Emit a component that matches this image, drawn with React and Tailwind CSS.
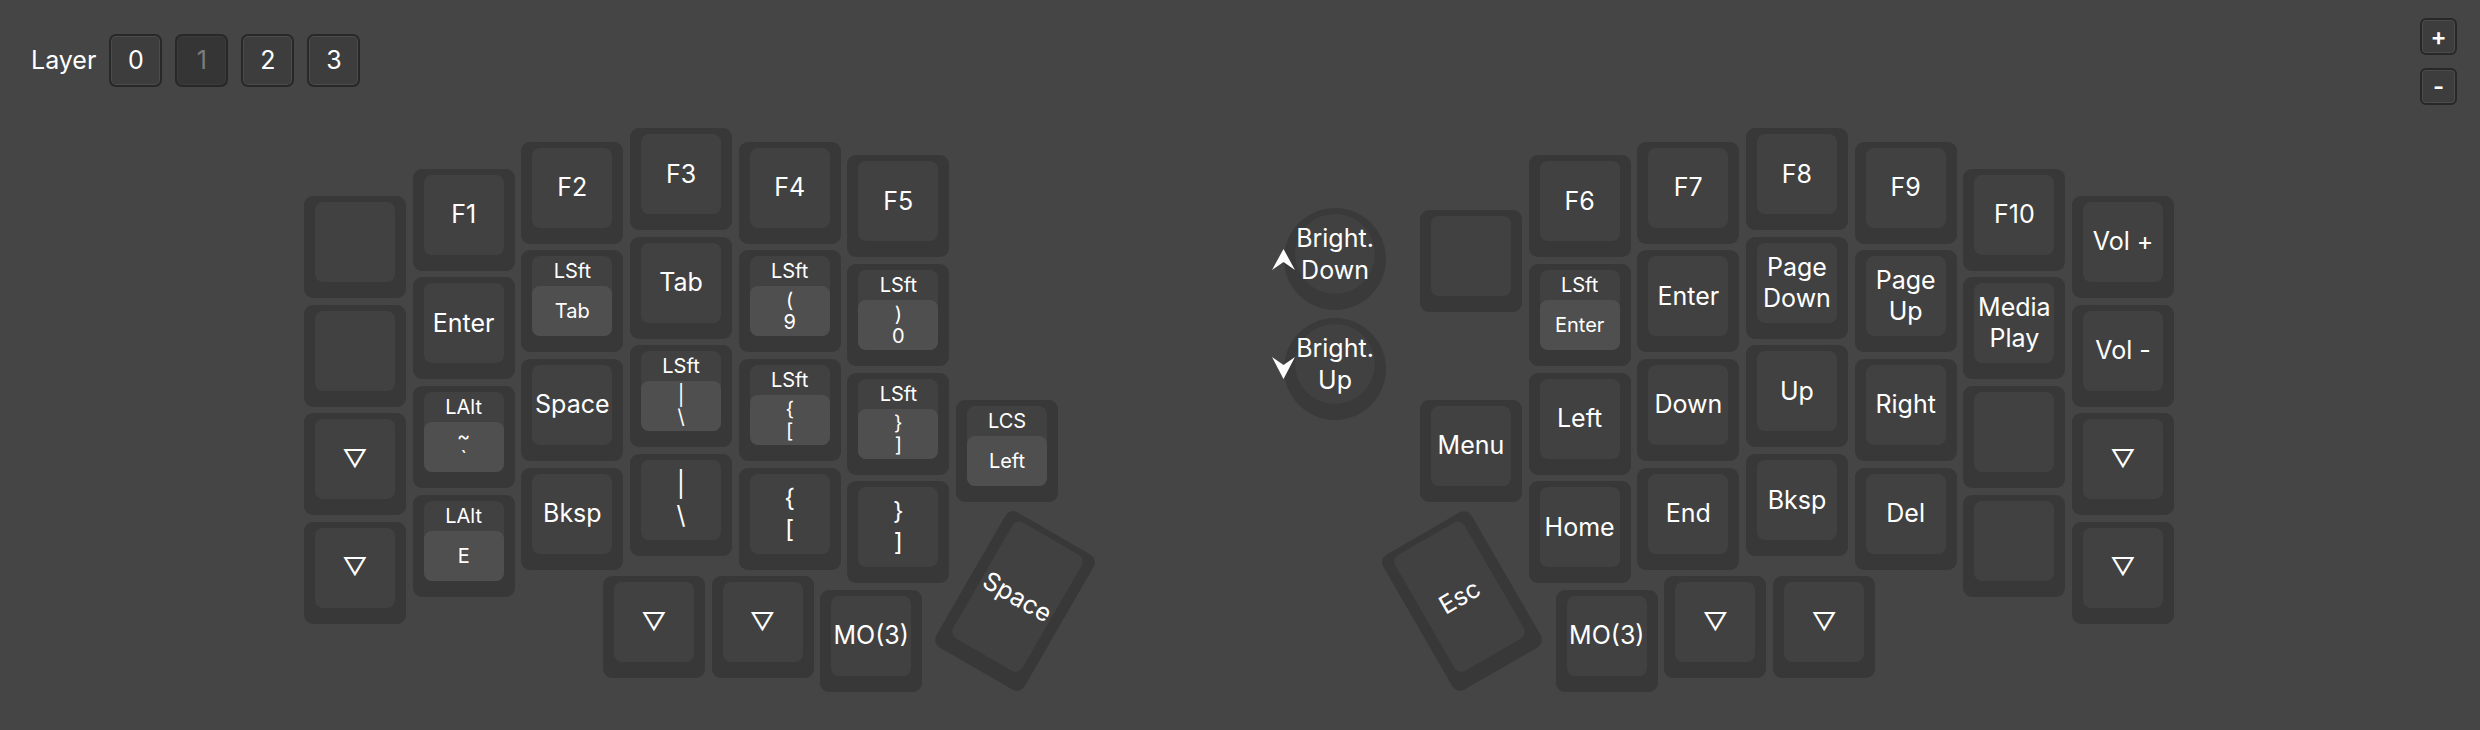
import React from "react";

// one key unit and the board origin (inside the board area)
const U = 108.67;
const LX = 304; // left half: outer column
const RX = 2072; // right half: outer column, mirrored
const TOP = 18;

// c = column from the outer edge, r = row (both in key units)
const leftKeys = [
  { c: 0, r: 0.625 },
  { c: 0, r: 1.625 },
  { c: 0, r: 2.625, t: "▽" },
  { c: 0, r: 3.625, t: "▽" },

  { c: 1, r: 0.375, t: "F1" },
  { c: 1, r: 1.375, t: "Enter" },
  { c: 1, r: 2.375, h: "LAlt", t: "~\n`" },
  { c: 1, r: 3.375, h: "LAlt", t: "E" },

  { c: 2, r: 0.125, t: "F2" },
  { c: 2, r: 1.125, h: "LSft", t: "Tab" },
  { c: 2, r: 2.125, t: "Space" },
  { c: 2, r: 3.125, t: "Bksp" },

  { c: 3, r: 0, t: "F3" },
  { c: 3, r: 1, t: "Tab" },
  { c: 3, r: 2, h: "LSft", t: "|\n\\" },
  { c: 3, r: 3, t: "|\n\\" },

  { c: 4, r: 0.125, t: "F4" },
  { c: 4, r: 1.125, h: "LSft", t: "(\n9" },
  { c: 4, r: 2.125, h: "LSft", t: "{\n[" },
  { c: 4, r: 3.125, t: "{\n[" },

  { c: 5, r: 0.25, t: "F5" },
  { c: 5, r: 1.25, h: "LSft", t: ")\n0" },
  { c: 5, r: 2.25, h: "LSft", t: "}\n]" },
  { c: 5, r: 3.25, t: "}\n]" },

  { c: 6, r: 2.5, h: "LCS", t: "Left" },

  // thumb cluster
  { c: 2.75, r: 4.125, t: "▽" },
  { c: 3.75, r: 4.125, t: "▽" },
  { c: 4.75, r: 4.25, t: "MO(3)" },
];

const rightKeys = [
  { c: 0, r: 0.625, t: "Vol +" },
  { c: 0, r: 1.625, t: "Vol -" },
  { c: 0, r: 2.625, t: "▽" },
  { c: 0, r: 3.625, t: "▽" },

  { c: 1, r: 0.375, t: "F10" },
  { c: 1, r: 1.375, t: "Media\nPlay" },
  { c: 1, r: 2.375 },
  { c: 1, r: 3.375 },

  { c: 2, r: 0.125, t: "F9" },
  { c: 2, r: 1.125, t: "Page\nUp" },
  { c: 2, r: 2.125, t: "Right" },
  { c: 2, r: 3.125, t: "Del" },

  { c: 3, r: 0, t: "F8" },
  { c: 3, r: 1, t: "Page\nDown" },
  { c: 3, r: 2, t: "Up" },
  { c: 3, r: 3, t: "Bksp" },

  { c: 4, r: 0.125, t: "F7" },
  { c: 4, r: 1.125, t: "Enter" },
  { c: 4, r: 2.125, t: "Down" },
  { c: 4, r: 3.125, t: "End" },

  { c: 5, r: 0.25, t: "F6" },
  { c: 5, r: 1.25, h: "LSft", t: "Enter" },
  { c: 5, r: 2.25, t: "Left" },
  { c: 5, r: 3.25, t: "Home" },

  { c: 6, r: 0.75 },
  { c: 6, r: 2.5, t: "Menu" },

  { c: 2.75, r: 4.125, t: "▽" },
  { c: 3.75, r: 4.125, t: "▽" },
  { c: 4.75, r: 4.25, t: "MO(3)" },
];

function Cap({ label, hold, height = 80 }) {
  if (hold) {
    return (
      <div className="flex flex-col rounded-[8px] bg-[#414141]" style={{ height }}>
        <div className="flex h-[30px] items-center justify-center text-[20px]">{hold}</div>
        <div className="flex flex-1 items-center justify-center whitespace-pre-line rounded-[8px] bg-[#4f4f4f] text-center text-[20px] leading-[22px]">
          {label}
        </div>
      </div>
    );
  }
  return (
    <div
      className="flex items-center justify-center whitespace-pre-line rounded-[8px] bg-[#414141] text-center text-[25px] leading-[31px]"
      style={{ height }}
    >
      {label}
    </div>
  );
}

function Key({ left, top, k }) {
  return (
    <div
      className="absolute h-[102px] w-[102px] rounded-[9px] bg-[#383838] px-[11px] pt-[6px]"
      style={{ left, top }}
    >
      <Cap label={k.t} hold={k.h} />
    </div>
  );
}

function Encoder({ top, label, dir }) {
  return (
    <div
      className="absolute left-[1284px] h-[102px] w-[102px] rounded-full bg-[#3a3a3a] px-[11px] pt-[6px]"
      style={{ top }}
    >
      <div className="flex h-[80px] items-center justify-center whitespace-pre-line rounded-full bg-[#414141] text-center text-[25px] leading-[32px]">
        {label}
      </div>
      <svg
        className={dir === "up" ? "absolute left-[-12px] top-[41px]" : "absolute left-[-12px] top-[39px]"}
        width="23"
        height="22"
        viewBox="0 0 23 22"
      >
        {dir === "up" ? (
          <polygon points="11.5,0 23,21 11.5,13 0,21" fill="#fff" />
        ) : (
          <polygon points="0,0 11.5,8 23,0 11.5,22" fill="#fff" />
        )}
      </svg>
    </div>
  );
}

function LayerButton({ children, active }) {
  return (
    <button
      className={
        active
          ? "flex h-[53px] w-[53px] items-center justify-center rounded-[7px] border-2 border-[#282828] bg-[#353535] text-[25px] text-[#7c7c7c] shadow-[inset_0_0_0_1px_#3c3c3c]"
          : "flex h-[53px] w-[53px] items-center justify-center rounded-[7px] border-2 border-[#282828] bg-[#3d3d3d] text-[25px] text-white shadow-[inset_0_0_0_1px_#4c4c4c]"
      }
    >
      {children}
    </button>
  );
}

export default function App() {
  return (
    <div className="h-[730px] w-[2480px] overflow-hidden bg-[#454545] font-['Inter','Noto_Sans','DejaVu_Sans',sans-serif] text-white">
      {/* top bar */}
      <div className="flex h-[110px] items-start justify-between pl-[31px] pr-[23px]">
        <div className="flex items-center gap-[13px] pt-[34px]">
          <span className="text-[25px]">Layer</span>
          <div className="flex gap-[13px]">
            <LayerButton>0</LayerButton>
            <LayerButton active>1</LayerButton>
            <LayerButton>2</LayerButton>
            <LayerButton>3</LayerButton>
          </div>
        </div>
        <div className="flex flex-col gap-[13px] pt-[18px]">
          <button className="flex h-[37px] w-[37px] items-center justify-center rounded-[6px] border-2 border-[#282828] bg-[#3d3d3d] text-[24px] font-semibold shadow-[inset_0_0_0_1px_#4c4c4c]">
            +
          </button>
          <button className="flex h-[37px] w-[37px] items-center justify-center rounded-[6px] border-2 border-[#282828] bg-[#3d3d3d] text-[24px] font-semibold shadow-[inset_0_0_0_1px_#4c4c4c]">
            -
          </button>
        </div>
      </div>

      {/* keyboard */}
      <div className="relative h-[620px]">
        {leftKeys.map((k, i) => (
          <Key key={"l" + i} k={k} left={LX + k.c * U} top={TOP + k.r * U} />
        ))}
        {rightKeys.map((k, i) => (
          <Key key={"r" + i} k={k} left={RX - k.c * U} top={TOP + k.r * U} />
        ))}

        {/* angled thumb keys */}
        <div className="absolute left-[964px] top-[413px] h-[156px] w-[102px] rotate-[30deg] rounded-[9px] bg-[#383838] px-[11px] pt-[6px]">
          <Cap label="Space" height={134} />
        </div>
        <div className="absolute left-[1411px] top-[413px] h-[156px] w-[102px] rotate-[-30deg] rounded-[9px] bg-[#383838] px-[11px] pt-[6px]">
          <Cap label="Esc" height={134} />
        </div>

        <Encoder top={98} label={"Bright.\nDown"} dir="up" />
        <Encoder top={208} label={"Bright.\nUp"} dir="down" />
      </div>
    </div>
  );
}
